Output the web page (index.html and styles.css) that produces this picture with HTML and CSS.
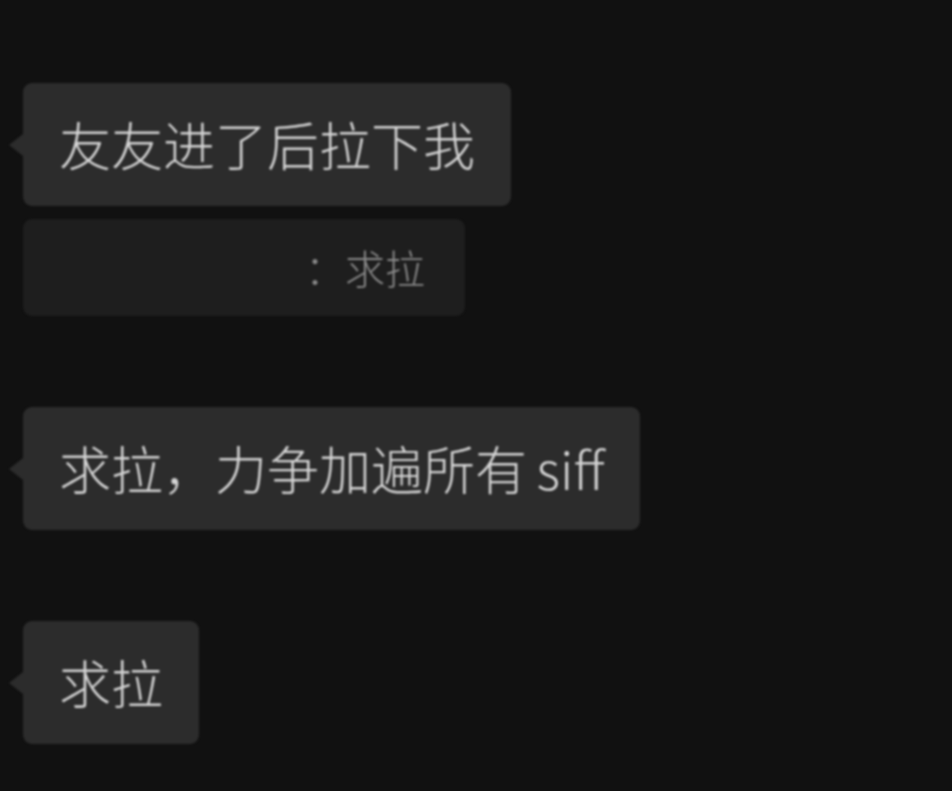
FILE: index.html
```html
<!DOCTYPE html>
<html lang="zh">
<head>
    <meta charset="UTF-8">
    <title>聊天</title>
    <link rel="stylesheet" href="styles.css">
</head>
<body>
    <div class="chat">
        <div class="name name-first"></div>
        <div class="bubble">友友进了后拉下我</div>
        <div class="quote"><span class="quote-name"></span>：求拉</div>

        <div class="name"></div>
        <div class="bubble">求拉，力争加遍所有<span class="latin"> siff</span></div>

        <div class="name"></div>
        <div class="bubble">求拉</div>
    </div>
</body>
</html>
```

FILE: styles.css
```css
html, body {
    margin: 0;
    padding: 0;
    background-color: #111111;
    height: 100%;
}

body {
    font-family: "Noto Sans CJK SC", "Noto Sans", sans-serif;
    overflow: hidden;
}

.chat {
    display: flex;
    flex-direction: column;
    align-items: flex-start;
    gap: 13px;
    padding-left: 23px;
    filter: blur(0.8px);
}

.name {
    height: 65px;
}

.name-first {
    height: 70px;
}

.bubble {
    position: relative;
    background-color: #2c2c2c;
    color: #d4d4d4;
    font-size: 52px;
    font-weight: 300;
    line-height: 61px;
    padding: 30px 36px 32px;
    border-radius: 9px;
    white-space: nowrap;
}

.bubble::before {
    content: "";
    position: absolute;
    left: -14px;
    top: 50%;
    margin-top: -11px;
    border-top: 11px solid transparent;
    border-bottom: 11px solid transparent;
    border-right: 14px solid #2c2c2c;
}

.latin {
    word-spacing: -2px;
}

.quote {
    background-color: #1e1e1e;
    color: #8a8a8a;
    font-size: 40px;
    font-weight: 300;
    line-height: 48px;
    padding: 24px 40px 25px 36px;
    border-radius: 9px;
    white-space: nowrap;
}

.quote-name {
    display: inline-block;
    width: 246px;
}
```
